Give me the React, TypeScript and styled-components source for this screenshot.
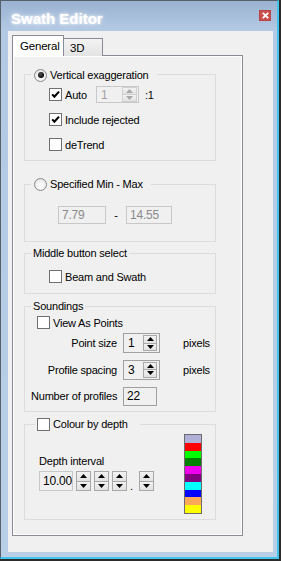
import styled, { createGlobalStyle } from 'styled-components'

const FONT = `"Liberation Sans", Arial, sans-serif`

const COLOR = {
    frameTop: '#9ab2d1',
    frameBottom: '#b9cfe8',
    face: '#f0f0f0',
    tabBorder: '#898c95',
    groupBorder: '#dcdcdc',
    boxBorder: '#707070',
    fieldBorder: '#a0a0a0',
    fieldBorderDisabled: '#c8c8c8',
    disabledText: '#8a8a8a',
}

const DEPTH_COLOURS = ['#b0b0d8', '#ff0000', '#00ff00', '#008000', '#ee00ee', '#800080', '#00ffff', '#0000ff', '#ffa858', '#ffff00']

const GlobalStyle = createGlobalStyle`
    html, body { margin: 0; padding: 0; }
    body {
        background: #2b2b2b;
        font-family: ${FONT};
        font-size: 11px;
        letter-spacing: -0.2px;
        color: #000;
    }
    * { box-sizing: border-box; }
`

function CheckBox({ checked }: { checked?: boolean }) {
    return <Box>
        {checked && <svg width="11" height="11" viewBox="0 0 11 11">
            <path d="M2.2 5.4 L4.4 7.8 L9 2.6" fill="none" stroke="#000" strokeWidth="2.1" />
        </svg>}
    </Box>
}

function Radio({ checked }: { checked?: boolean }) {
    return <RadioRing>{checked && <RadioDot />}</RadioRing>
}

function Arrow({ down, disabled }: { down?: boolean, disabled?: boolean }) {
    return <svg width="7" height="4" viewBox="0 0 7 4">
        <path d={down ? 'M0 0 L7 0 L3.5 4 Z' : 'M0 4 L7 4 L3.5 0 Z'} fill={disabled ? '#a8a8a8' : '#000'} />
    </svg>
}

function Spinner({ disabled, width, height }: { disabled?: boolean, width: number, height: number }) {
    return <SpinColumn $width={width} $height={height}>
        <SpinHalf $disabled={disabled}><Arrow disabled={disabled} /></SpinHalf>
        <SpinHalf $disabled={disabled}><Arrow down disabled={disabled} /></SpinHalf>
    </SpinColumn>
}

function SpinField({ value, width, height, disabled }: { value: string, width: number, height: number, disabled?: boolean }) {
    return <Field $width={width} $height={height} $disabled={disabled}>
        <FieldText $disabled={disabled}>{value}</FieldText>
        <Spinner disabled={disabled} width={disabled ? 15 : 14} height={height - (disabled ? 2 : 4)} />
    </Field>
}

export default function App() {
    return <Screen>
        <GlobalStyle />
        <Window>
            <TitleBar>
                <Title>Swath Editor</Title>
                <CloseButton>
                    <svg width="7" height="7" viewBox="0 0 7 7">
                        <path d="M0.8 0.8 L6.2 6.2 M6.2 0.8 L0.8 6.2" stroke="#fff" strokeWidth="1.8" />
                    </svg>
                </CloseButton>
            </TitleBar>
            <Client>
                <TabStrip>
                    <Tab $active>General</Tab>
                    <Tab>3D</Tab>
                </TabStrip>
                <Panel>
                    <Group $top={0} $padTop={5} $padBottom={7}>
                        <Legend $left={3} $right={8}>
                            <LegendRow><Radio checked />Vertical exaggeration</LegendRow>
                        </Legend>
                        <Rows $indent={18}>
                            <Row>
                                <CheckBox checked />
                                <AutoLabel>Auto</AutoLabel>
                                <SpinField value="1" width={43} height={17} disabled />
                                <Ratio>:1</Ratio>
                            </Row>
                            <Row><CheckBox checked />Include rejected</Row>
                            <Row><CheckBox />deTrend</Row>
                        </Rows>
                    </Group>

                    <Group $top={16} $padTop={15} $padBottom={17}>
                        <Legend $left={3} $right={8}>
                            <LegendRow><Radio />Specified Min - Max</LegendRow>
                        </Legend>
                        <RangeRow>
                            <TextBox $width={48} $disabled>7.79</TextBox>
                            <Dash>-</Dash>
                            <TextBox $width={46} $disabled>14.55</TextBox>
                        </RangeRow>
                    </Group>

                    <Group $top={4} $padTop={8} $padBottom={8}>
                        <Legend $left={2} $right={2}>Middle button select</Legend>
                        <Rows $indent={18}>
                            <Row><CheckBox />Beam and Swath</Row>
                        </Rows>
                    </Group>

                    <Group $top={5} $padTop={1} $padBottom={5}>
                        <Legend $left={2} $right={2}>Soundings</Legend>
                        <Rows $indent={6}>
                            <Row><CheckBox />View As Points</Row>
                        </Rows>
                        <SettingsGrid>
                            <SettingLabel>Point size</SettingLabel>
                            <SpinField value="1" width={37} height={20} />
                            <Unit>pixels</Unit>
                            <SettingLabel>Profile spacing</SettingLabel>
                            <SpinField value="3" width={37} height={20} />
                            <Unit>pixels</Unit>
                            <SettingLabel>Number of profiles</SettingLabel>
                            <TextBox $width={34} $height={19}>22</TextBox>
                        </SettingsGrid>
                    </Group>

                    <Group $top={5} $padTop={3} $padBottom={5}>
                        <Legend $left={2} $right={12} $shift={4}>
                            <LegendRow><CheckBox />Colour by depth</LegendRow>
                        </Legend>
                        <DepthLayout>
                            <DepthColumn>
                                <DepthTitle>Depth interval</DepthTitle>
                                <DepthRow>
                                    <TextBox $width={34} $height={20} $light>10.000</TextBox>
                                    <Spinner width={15} height={20} />
                                    <Spinner width={15} height={20} />
                                    <Spinner width={15} height={20} />
                                    <Point>.</Point>
                                    <Spinner width={15} height={20} />
                                </DepthRow>
                            </DepthColumn>
                            <ColourBar>
                                {DEPTH_COLOURS.map(colour => <Stripe key={colour} style={{ background: colour }} />)}
                            </ColourBar>
                        </DepthLayout>
                    </Group>
                </Panel>
            </Client>
        </Window>
    </Screen>
}

const Screen = styled.div`
    width: 281px;
    height: 561px;
    overflow: hidden;
    background: #2b2b2b;
`

const Window = styled.div`
    width: 279px;
    height: 559px;
    display: flex;
    flex-direction: column;
    border-top: 1px solid #56606b;
    border-left: 1px solid #56606b;
    border-right: 2px solid #44c4ec;
    border-bottom: 2px solid #44c4ec;
    padding: 0 4px 5px 7px;
    background: linear-gradient(to bottom, ${COLOR.frameTop} 0, #b4cae4 30px, ${COLOR.frameBottom} 100%);
`

const TitleBar = styled.div`
    height: 30px;
    display: flex;
    justify-content: space-between;
    align-items: flex-start;
    padding: 9px 2px 0 3px;
`

const Title = styled.div`
    margin-top: 1px;
    font-size: 15px;
    line-height: 15px;
    font-weight: bold;
    letter-spacing: 0;
    color: #fff;
    text-shadow: 0 0 3px rgba(255, 255, 255, 0.9), 0 0 6px rgba(255, 255, 255, 0.6);
`

const CloseButton = styled.div`
    width: 12px;
    height: 11px;
    display: flex;
    align-items: center;
    justify-content: center;
    background: #c9504f;
    border: 1px solid #b84444;
`

const Client = styled.div`
    flex: 1;
    background: ${COLOR.face};
    padding: 4px 0 0 4px;
`

const TabStrip = styled.div`
    height: 21px;
    display: flex;
    align-items: flex-end;
    margin-bottom: -1px;
`

const Tab = styled.div<{ $active?: boolean }>`
    position: relative;
    z-index: ${p => p.$active ? 1 : 0};
    height: ${p => p.$active ? 21 : 18}px;
    width: ${p => p.$active ? 52 : 40}px;
    margin-left: ${p => p.$active ? 0 : -1}px;
    padding: ${p => p.$active ? '3px 0 0 7px' : '2px 0 0 6px'};
    border: 1px solid ${COLOR.tabBorder};
    border-bottom: none;
    background: ${p => p.$active ? '#fff' : 'linear-gradient(to bottom, #f3f3f3, #e3e3e3)'};
    line-height: 14px;
    font-size: 11.5px;
`

const Panel = styled.div`
    width: 231px;
    height: 481px;
    display: flex;
    flex-direction: column;
    padding: 11px 0 0 11px;
    border: 1px solid ${COLOR.tabBorder};
    box-shadow: inset 0 0 0 1px #fff;
    background: ${COLOR.face};
`

const Group = styled.fieldset<{ $top: number, $padTop: number, $padBottom: number }>`
    width: 192px;
    min-width: 0;
    margin: ${p => p.$top}px 0 0 0;
    padding: ${p => p.$padTop}px 13px ${p => p.$padBottom}px 6px;
    border: 1px solid ${COLOR.groupBorder};
`

const Legend = styled.legend<{ $left: number, $right: number, $shift?: number }>`
    height: 14px;
    line-height: 14px;
    margin-left: ${p => p.$shift ?? 0}px;
    padding: 0 ${p => p.$right}px 0 ${p => p.$left}px;
`

const LegendRow = styled.span`
    display: inline-flex;
    align-items: center;
    gap: 3px;
    height: 14px;
`

const Box = styled.span`
    width: 13px;
    height: 13px;
    flex: none;
    display: inline-flex;
    align-items: center;
    justify-content: center;
    border: 1px solid ${COLOR.boxBorder};
    background: #fff;
`

const RadioRing = styled.span`
    width: 13px;
    height: 13px;
    flex: none;
    display: inline-flex;
    align-items: center;
    justify-content: center;
    border: 1px solid #8a8a8a;
    border-radius: 50%;
    background: radial-gradient(circle at 50% 60%, #ffffff 0, #f2f2f2 45%, #d8d8d8 100%);
`

const RadioDot = styled.span`
    width: 6px;
    height: 6px;
    border-radius: 50%;
    background: radial-gradient(circle at 40% 35%, #555 0, #111 60%, #000 100%);
`

const Rows = styled.div<{ $indent: number }>`
    display: flex;
    flex-direction: column;
    gap: 8px;
    margin-left: ${p => p.$indent}px;
`

const Row = styled.div`
    height: 17px;
    display: flex;
    align-items: center;
    gap: 3px;
`

const AutoLabel = styled.span`
    width: 28px;
`

const Ratio = styled.span`
    margin-left: 3px;
`

const Field = styled.div<{ $width: number, $height: number, $disabled?: boolean }>`
    width: ${p => p.$width}px;
    height: ${p => p.$height}px;
    display: flex;
    align-items: center;
    justify-content: space-between;
    padding: ${p => p.$disabled ? '0 1px 0 4px' : '0 2px 0 4px'};
    border: 1px solid ${p => p.$disabled ? COLOR.fieldBorderDisabled : COLOR.fieldBorder};
    background: ${COLOR.face};
`

const FieldText = styled.span<{ $disabled?: boolean }>`
    font-size: 12px;
    color: ${p => p.$disabled ? '#a0a0a0' : '#000'};
`

const SpinColumn = styled.div<{ $width: number, $height: number }>`
    width: ${p => p.$width}px;
    height: ${p => p.$height}px;
    flex: none;
    display: flex;
    flex-direction: column;
`

const SpinHalf = styled.div<{ $disabled?: boolean }>`
    flex: 1;
    display: flex;
    align-items: center;
    justify-content: center;
    border: 1px solid ${p => p.$disabled ? '#d0d0d0' : '#a8a8a8'};
    background: linear-gradient(to bottom, #f2f2f2, #e2e2e2);

    & + & {
        border-top: none;
    }
`

const TextBox = styled.div<{ $width: number, $height?: number, $disabled?: boolean, $light?: boolean }>`
    width: ${p => p.$width}px;
    height: ${p => p.$height ?? 18}px;
    flex: none;
    overflow: hidden;
    white-space: nowrap;
    padding-left: 3px;
    display: flex;
    align-items: center;
    font-size: 12px;
    color: ${p => p.$disabled ? COLOR.disabledText : '#000'};
    border: 1px solid ${p => p.$disabled || p.$light ? COLOR.fieldBorderDisabled : COLOR.fieldBorder};
    background: ${COLOR.face};
`

const RangeRow = styled.div`
    display: flex;
    align-items: center;
    margin-left: 27px;
`

const Dash = styled.span`
    width: 20px;
    text-align: center;
`

const SettingsGrid = styled.div`
    display: grid;
    grid-template-columns: 86px 54px auto;
    grid-auto-rows: 20px;
    column-gap: 6px;
    row-gap: 6.5px;
    align-items: center;
    margin-top: 2px;
`

const SettingLabel = styled.span`
    text-align: right;
    white-space: nowrap;
`

const Unit = styled.span``

const DepthLayout = styled.div`
    display: flex;
    justify-content: space-between;
`

const DepthColumn = styled.div`
    display: flex;
    flex-direction: column;
    margin: 20px 0 0 8px;
`

const DepthTitle = styled.span`
    line-height: 14px;
    margin-bottom: 3px;
`

const DepthRow = styled.div`
    display: flex;
    align-items: flex-end;
    gap: 3px;
`

const Point = styled.span`
    width: 6px;
    line-height: 10px;
`

const ColourBar = styled.div`
    width: 18px;
    height: 80px;
    display: flex;
    flex-direction: column;
    border: 1px solid #6c6c6c;
`

const Stripe = styled.div`
    flex: 1;
`
